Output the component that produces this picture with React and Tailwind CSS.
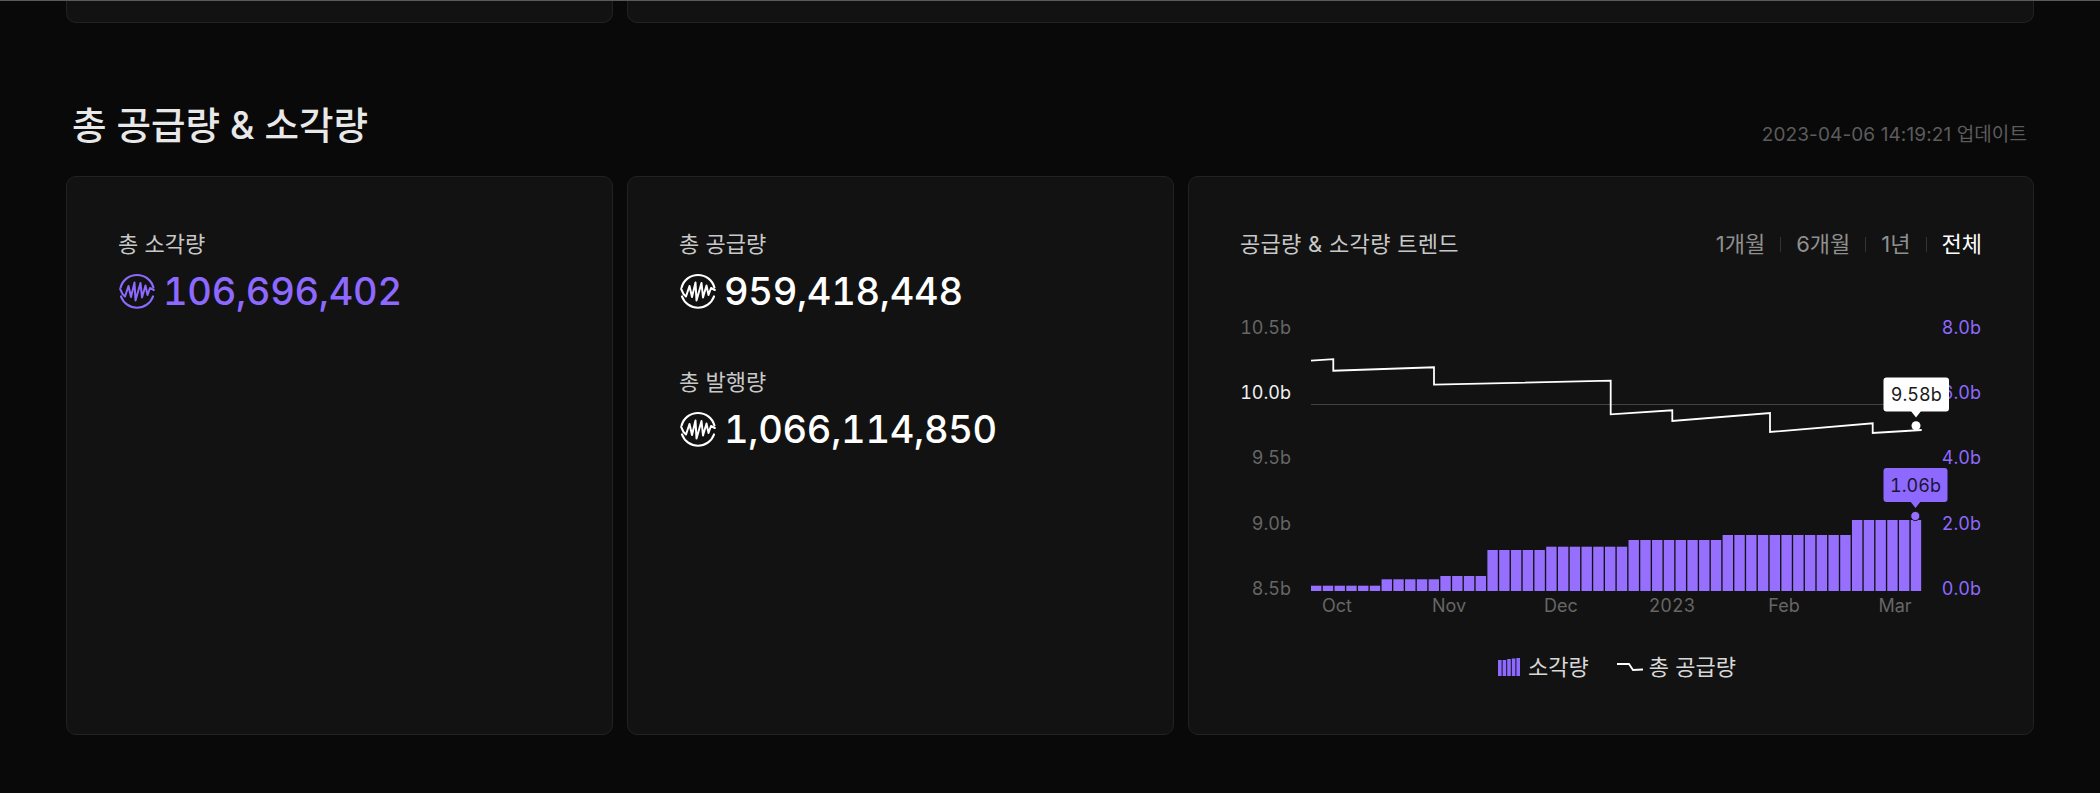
const KR = "font-['Inter','Noto_Sans_CJK_KR',sans-serif]";

const LINE_POINTS =
  "1311,360.7 1333.3,359.2 1333.3,370.7 1434,367.3 1434,384.7 1610.7,380.7 1610.7,414.3 1672.3,410.3 1672.3,421 1770,413 1770,432 1872.7,423.3 1872.7,433 1921.7,430";

const BAR_RUNS = [
  [6, 5.3],
  [5, 11.7],
  [4, 15],
  [5, 41],
  [7, 44.3],
  [8, 51],
  [11, 56],
  [6, 71],
];

const BARS = BAR_RUNS.flatMap(([count, height]) => Array(count).fill(height));

const LEFT_TICKS = [
  ["10.5b", 327, "#666666"],
  ["10.0b", 392, "#f0f0f0"],
  ["9.5b", 457.5, "#666666"],
  ["9.0b", 523, "#666666"],
  ["8.5b", 588.5, "#666666"],
];

const RIGHT_TICKS = [
  ["8.0b", 327],
  ["6.0b", 392],
  ["4.0b", 457.5],
  ["2.0b", 523],
  ["0.0b", 588.5],
];

const MONTHS = [
  ["Oct", 1337],
  ["Nov", 1449],
  ["Dec", 1561],
  ["2023", 1672],
  ["Feb", 1784],
  ["Mar", 1895],
];

function CoinIcon({ className = "" }) {
  return (
    <svg viewBox="0 0 36 36" fill="none" stroke="currentColor" strokeWidth="2.2" strokeLinejoin="round" strokeLinecap="round" className={`h-9 w-9 shrink-0 ${className}`}>
      <path d="M1.6 14.5A17 17 0 0 1 34.4 14.5" />
      <path d="M2 23.5A17 17 0 0 0 34 23.5" />
      <path strokeWidth="2" d="M1.2 16 3.5 21 6 23.5 9.5 13 12 24 15.5 9.5 16.5 27.5 21.5 10 23 24.5 26.5 12.5 28.5 22 31 15 34.8 17" />
    </svg>
  );
}

function Card({ children, className = "" }) {
  return <div className={`rounded-[10px] border border-[#222] bg-[#121212] ${className}`}>{children}</div>;
}

function Stat({ label, value, purple }) {
  return (
    <div>
      <div className="h-8 text-[22px] leading-8 text-[#c8c8c8]">{label}</div>
      <div className={`mt-[13px] flex h-9 items-center gap-[8px] pl-px ${purple ? "text-[#8d69ff]" : "text-white"}`}>
        <CoinIcon />
        <span className="text-[38px] leading-9 font-[550] tracking-[-0.3px] tabular-nums">{value}</span>
      </div>
    </div>
  );
}

function Tooltip({ x, y, width, tipX, fill, color, text }) {
  return (
    <g>
      <rect x={x} y={y} width={width} height="34" rx="3" fill={fill} />
      <path d={`M${tipX - 5.5} ${y + 33}L${tipX + 5.5} ${y + 33}L${tipX} ${y + 40}Z`} fill={fill} />
      <text x={x + width / 2} y={y + 23.5} textAnchor="middle" fill={color}>
        {text}
      </text>
    </g>
  );
}

function Chart() {
  return (
    <svg viewBox="1240 300 742 320" className="mt-[40px] block h-[320px] w-[742px] text-[18px] tabular-nums">
      {LEFT_TICKS.map(([label, y, color]) => (
        <text key={label} x="1291" y={y + 6.5} textAnchor="end" fill={color}>
          {label}
        </text>
      ))}
      {RIGHT_TICKS.map(([label, y]) => (
        <text key={label} x="1981" y={y + 6.5} textAnchor="end" fill="#8d69ff">
          {label}
        </text>
      ))}
      {MONTHS.map(([label, x]) => (
        <text key={label} x={x} y="612" textAnchor="middle" fill="#666666">
          {label}
        </text>
      ))}
      {BARS.map((height, i) => (
        <rect key={i} x={1311 + i * 11.76} y={591 - height} width="10.4" height={height} fill="#966fff" />
      ))}
      <line x1="1311" y1="404.5" x2="1921" y2="404.5" stroke="#444" />
      <polyline points={LINE_POINTS} fill="none" stroke="#fff" strokeWidth="1.8" />
      <circle cx="1916" cy="425.7" r="4.5" fill="#fff" />
      <circle cx="1915.3" cy="516" r="4.6" fill="#966fff" stroke="#121212" />
      <Tooltip x={1883.5} y={377.5} width={65.5} tipX={1916} fill="#fff" color="#1a1a1a" text="9.58b" />
      <Tooltip x={1883.5} y={468} width={64} tipX={1915.5} fill="#8d69ff" color="#1c1436" text="1.06b" />
    </svg>
  );
}

function Legend() {
  return (
    <div className="mt-[33px] flex items-center justify-center pl-[12px] text-[22px] leading-7 text-[#d8d8d8]">
      <svg viewBox="0 0 22 18" className="mr-[8px] h-[18px] w-[22px]" fill="#8d69ff">
        <rect x="0" y="2" width="3.6" height="16" />
        <rect x="4.6" y="2" width="3.6" height="16" />
        <rect x="9.2" y="1" width="3.6" height="17" />
        <rect x="13.8" y="0.5" width="3.6" height="17.5" />
        <rect x="18.4" y="0" width="3.6" height="18" />
      </svg>
      <span>소각량</span>
      <svg viewBox="0 0 26 8" className="mr-[6px] ml-[28px] h-2 w-[26px]" fill="none" stroke="#fff" strokeWidth="1.8">
        <polyline points="0,1 12,1 16,7 26,6.5" />
      </svg>
      <span>총 공급량</span>
    </div>
  );
}

function RangeTabs() {
  const tabs = ["1개월", "6개월", "1년"];
  return (
    <div className="flex items-center text-[22px] leading-8 text-[#8f8f8f]">
      {tabs.map((tab) => (
        <span key={tab} className="flex items-center">
          {tab}
          <span className="mx-[15px] h-[15px] w-px bg-[#333]" />
        </span>
      ))}
      <span className="text-white">전체</span>
    </div>
  );
}

export default function App() {
  return (
    <div className={`h-[793px] overflow-hidden border-t border-[#5a5a5a] bg-[#090909] px-[66px] ${KR}`}>
      <div className="grid grid-cols-[547px_1fr] gap-[14px]">
        <div className="h-[22px] rounded-b-[10px] border border-t-0 border-[#222] bg-[#121212]" />
        <div className="h-[22px] rounded-b-[10px] border border-t-0 border-[#222] bg-[#121212]" />
      </div>

      <div className="flex h-[153px] items-end justify-between pr-[7px] pb-[27px] pl-[6px]">
        <h2 className="text-[37.5px] leading-[46px] font-medium text-[#e8e8e8]">총 공급량 &amp; 소각량</h2>
        <span className="text-[19px] leading-[28px] tracking-[0.1px] text-[#5c5c5c]">2023-04-06 14:19:21 업데이트</span>
      </div>

      <div className="grid h-[559px] grid-cols-[547px_547px_846px] gap-[14px]">
        <Card className="px-[51px] pt-[51px]">
          <Stat label="총 소각량" value="106,696,402" purple />
        </Card>
        <Card className="flex flex-col gap-[57px] px-[51px] pt-[51px]">
          <Stat label="총 공급량" value="959,418,448" />
          <Stat label="총 발행량" value="1,066,114,850" />
        </Card>
        <Card className="px-[51px] pt-[51px]">
          <div className="flex items-center justify-between">
            <span className="text-[22px] leading-8 tracking-[0.3px] text-[#c8c8c8]">공급량 &amp; 소각량 트렌드</span>
            <RangeTabs />
          </div>
          <Chart />
          <Legend />
        </Card>
      </div>
    </div>
  );
}
